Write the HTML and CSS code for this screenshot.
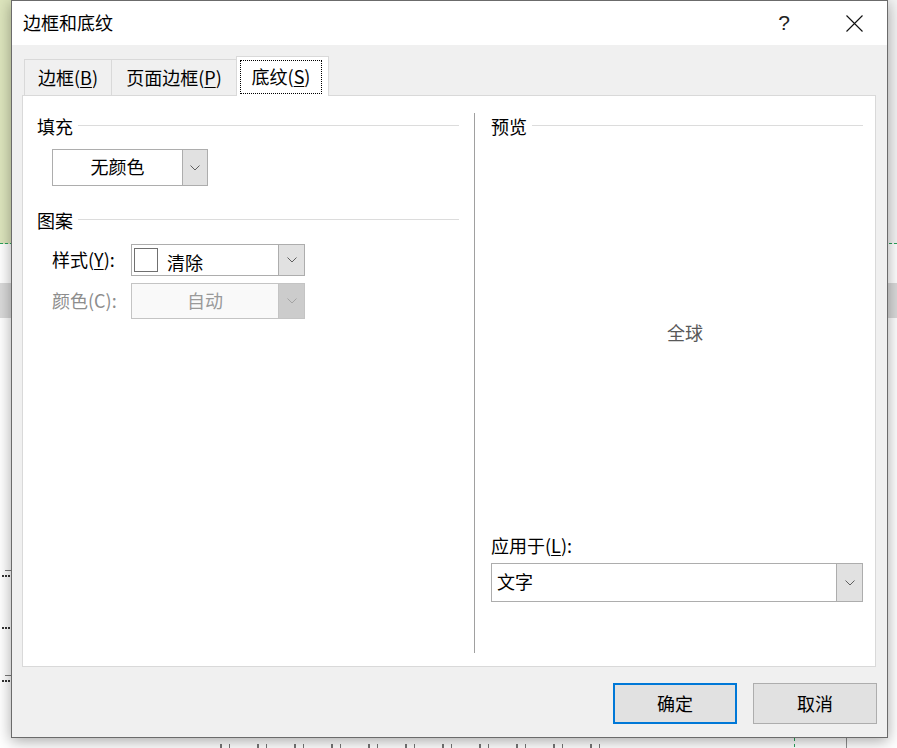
FILE: index.html
```html
<!DOCTYPE html>
<html lang="zh-CN">
<head>
<meta charset="utf-8">
<title>边框和底纹</title>
<link rel="stylesheet" href="styles.css">
</head>
<body>
<div class="desk">
  <div class="doc">
    <div class="doc-top"></div>
    <div class="doc-gap"></div>
    <div class="doc-band"></div>
    <div class="doc-body">
      <div class="tick"></div>
      <div class="dots d1"></div>
      <div class="dots d2"></div>
      <div class="tick t2"></div>
      <div class="dots d1"></div>
      <div class="doc-frag"></div>
    </div>
  </div>

  <section class="dialog">
    <header class="titlebar">
      <span class="title">边框和底纹</span>
      <span class="help">?</span>
      <span class="close">
        <svg width="17" height="17" viewBox="0 0 17 17"><path d="M0.5 0.5L16.5 16.5M16.5 0.5L0.5 16.5" stroke="#111" stroke-width="1.1" fill="none"/></svg>
      </span>
    </header>
    <div class="body">
      <div class="tabs">
        <div class="tab tab-1">边框(<u>B</u>)</div>
        <div class="tab tab-2">页面边框(<u>P</u>)</div>
        <div class="tab tab-3 active"><span class="focus">底纹(<u>S</u>)</span></div>
      </div>
      <div class="panel">
        <div class="col col-left">
          <div class="group-h"><span>填充</span></div>
          <div class="combo combo-fill">
            <span class="val val-center">无颜色</span>
            <span class="arrow"><svg width="10" height="6" viewBox="0 0 10 6"><path d="M0.5 0.5L5 5L9.5 0.5" stroke="#5f5f5f" fill="none"/></svg></span>
          </div>
          <div class="group-h group-pattern"><span>图案</span></div>
          <div class="row row-style">
            <span class="lbl">样式(<u>Y</u>):</span>
            <div class="combo combo-style">
              <span class="swatch"></span>
              <span class="val val-style">清除</span>
              <span class="arrow"><svg width="10" height="6" viewBox="0 0 10 6"><path d="M0.5 0.5L5 5L9.5 0.5" stroke="#5f5f5f" fill="none"/></svg></span>
            </div>
          </div>
          <div class="row row-color">
            <span class="lbl lbl-disabled">颜色(C):</span>
            <div class="combo combo-disabled">
              <span class="val val-center">自动</span>
              <span class="arrow"><svg width="10" height="6" viewBox="0 0 10 6"><path d="M0.5 0.5L5 5L9.5 0.5" stroke="#a4a4a4" fill="none"/></svg></span>
            </div>
          </div>
        </div>
        <div class="sep"></div>
        <div class="col col-right">
          <div class="group-h"><span>预览</span></div>
          <div class="preview">全球</div>
          <div class="apply-label">应用于(<u>L</u>):</div>
          <div class="combo combo-apply">
            <span class="val val-apply">文字</span>
            <span class="arrow"><svg width="10" height="6" viewBox="0 0 10 6"><path d="M0.5 0.5L5 5L9.5 0.5" stroke="#5f5f5f" fill="none"/></svg></span>
          </div>
        </div>
      </div>
      <div class="buttons">
        <button class="btn btn-default">确定</button>
        <button class="btn">取消</button>
      </div>
    </div>
  </section>
</div>
</body>
</html>
```

FILE: styles.css
```css
* { box-sizing: border-box; }
html, body { margin: 0; padding: 0; }
body {
  width: 897px;
  height: 748px;
  overflow: hidden;
  background: #fff;
  font-family: "Noto Sans CJK SC", "Noto Sans", sans-serif;
}
.desk { position: relative; width: 897px; height: 748px; overflow: hidden; }

/* document behind the dialog */
.doc { display: flex; flex-direction: column; height: 748px; }
.doc-top {
  height: 244px;
  flex: none;
  background: linear-gradient(to right, #dde5bd 0 11px, #f4f4f4 11px);
  border-bottom: 1px dashed #2aa35a;
}
.doc-gap { height: 39px; flex: none; background: #fff; }
.doc-band { height: 35px; flex: none; background: #dadada; }
.doc-body {
  flex: 1;
  padding-top: 252px;
  background:
    linear-gradient(#8f8f8f, #8f8f8f) 846px 0 / 1px 100% no-repeat,
    repeating-linear-gradient(to bottom, #2aa35a 0 3px, transparent 3px 6px) 794px 0 / 1px 100% no-repeat,
    #fff;
}
.tick { width: 6px; height: 1px; margin-left: 5px; background: #7a7a7a; }
.t2 { margin-top: 46px; }
.dots { width: 8px; height: 0; margin-left: 2px; border-top: 2px dotted #333; }
.d1 { margin-top: 4px; }
.d2 { margin-top: 50px; }
.doc-frag {
  margin: 62px 0 0 220px;
  width: 390px;
  height: 4px;
  background: repeating-linear-gradient(to right, #555 0 2px, transparent 2px 9px, #555 9px 10px, transparent 10px 37px);
  opacity: 0.8;
}

/* dialog window */
.dialog {
  position: absolute;
  left: 11px;
  top: 0;
  width: 877px;
  height: 738px;
  background: #f0f0f0;
  border: 1px solid #6b6b6b;
  box-shadow: 0 3px 14px rgba(0, 0, 0, 0.35);
  display: flex;
  flex-direction: column;
  font-size: 18px;
  color: #000;
}
.titlebar {
  height: 44px;
  flex: none;
  background: #fff;
  display: flex;
  align-items: center;
}
.title { padding-left: 11px; line-height: 24px; padding-bottom: 2px; }
.help {
  margin-left: auto;
  width: 46px;
  text-align: center;
  font-family: "Liberation Sans", sans-serif;
  font-size: 21px;
  line-height: 24px;
  color: #222;
}
.close {
  width: 60px;
  margin-left: 17px;
  margin-right: 3px;
  display: flex;
  justify-content: center;
}
.close svg { display: block; }

.body {
  flex: 1;
  padding: 11px 10px 13px 10px;
  display: flex;
  flex-direction: column;
}
.tabs {
  display: flex;
  align-items: flex-end;
  height: 39px;
  flex: none;
  margin-left: 2px;
}
.tab {
  height: 36px;
  border: 1px solid #d9d9d9;
  border-bottom: 0;
  background: #f0f0f0;
  line-height: 34px;
  text-align: center;
  white-space: nowrap;
}
.tab + .tab { margin-left: -1px; }
.tab-1 { width: 88px; }
.tab-2 { width: 126px; }
.tab-3 { width: 93px; }
.tab.active {
  height: 40px;
  margin-bottom: -1px;
  background: #fff;
  position: relative;
  z-index: 2;
  padding: 3px 0 0 3px;
}
.focus {
  display: block;
  width: 82px;
  height: 34px;
  border: 1px dotted #000;
  line-height: 31px;
  text-align: center;
}
u { text-decoration: underline; text-underline-offset: 2px; }

.panel {
  position: relative;
  z-index: 1;
  flex: none;
  height: 572px;
  margin-right: 1px;
  background: #fff;
  border: 1px solid #d9d9d9;
  display: grid;
  grid-template-columns: 451px 1px 1fr;
}
.col { display: flex; flex-direction: column; min-width: 0; }
.col-left { padding: 0 15px 0 14px; }
.col-right { padding: 0 12px 64px 16px; }
.sep { background: #a0a0a0; margin: 17px 0 13px; }

.group-h {
  display: flex;
  align-items: center;
  height: 24px;
  line-height: 22px;
  margin-top: 18px;
  white-space: nowrap;
}
.group-h span { padding-bottom: 1px; }
.group-h::after {
  content: "";
  flex: 1;
  height: 1px;
  margin-left: 5px;
  margin-top: -1px;
  background: #dcdcdc;
}
.group-pattern { margin-top: 22px; }

.combo {
  display: flex;
  align-items: stretch;
  background: #fff;
  border: 1px solid #adadad;
}
.val { flex: 1; display: flex; align-items: center; white-space: nowrap; padding-bottom: 3px; }
.val-center { justify-content: center; }
.arrow {
  flex: none;
  width: 25px;
  border-left: 1px solid #adadad;
  background: #e1e1e1;
  display: flex;
  align-items: center;
  justify-content: center;
}
.arrow svg { display: block; }

.combo-fill { width: 156px; height: 37px; margin: 11px 0 0 15px; }

.row { display: flex; align-items: center; padding-left: 15px; }
.row-style { margin-top: 12px; }
.row-color { margin-top: 7px; }
.lbl { width: 79px; white-space: nowrap; padding-bottom: 3px; }
.lbl-disabled { color: #8d8d8d; }
.combo-style { width: 174px; height: 32px; align-items: center; }
.combo-style .arrow { align-self: stretch; width: 26px; }
.swatch {
  flex: none;
  width: 24px;
  height: 24px;
  margin-left: 2px;
  border: 1px solid #707070;
  background: #fff;
}
.val-style { padding-left: 9px; padding-top: 3px; padding-bottom: 0; align-self: stretch; }
.combo-disabled {
  width: 174px;
  height: 36px;
  border-color: #c4c4c4;
  background: #f9f9f9;
  color: #999;
}
.combo-disabled .arrow { width: 26px; background: #cccccc; border-left-color: #c4c4c4; }

.preview {
  flex: 1;
  display: flex;
  align-items: center;
  justify-content: center;
  padding: 0 0 9px 16px;
  color: #595959;
}
.apply-label { line-height: 24px; white-space: nowrap; padding-bottom: 2px; margin-top: -2px; }
.combo-apply { height: 39px; margin-top: 4px; }
.combo-apply .arrow { width: 26px; }
.val-apply { padding-left: 5px; }

.buttons {
  display: flex;
  justify-content: flex-end;
  gap: 16px;
  margin-top: 16px;
  flex: none;
}
.btn {
  width: 124px;
  height: 41px;
  padding: 0 0 2px;
  font: inherit;
  color: #000;
  background: #e1e1e1;
  border: 1px solid #adadad;
}
.btn-default { border: 2px solid #0078d7; }
```
